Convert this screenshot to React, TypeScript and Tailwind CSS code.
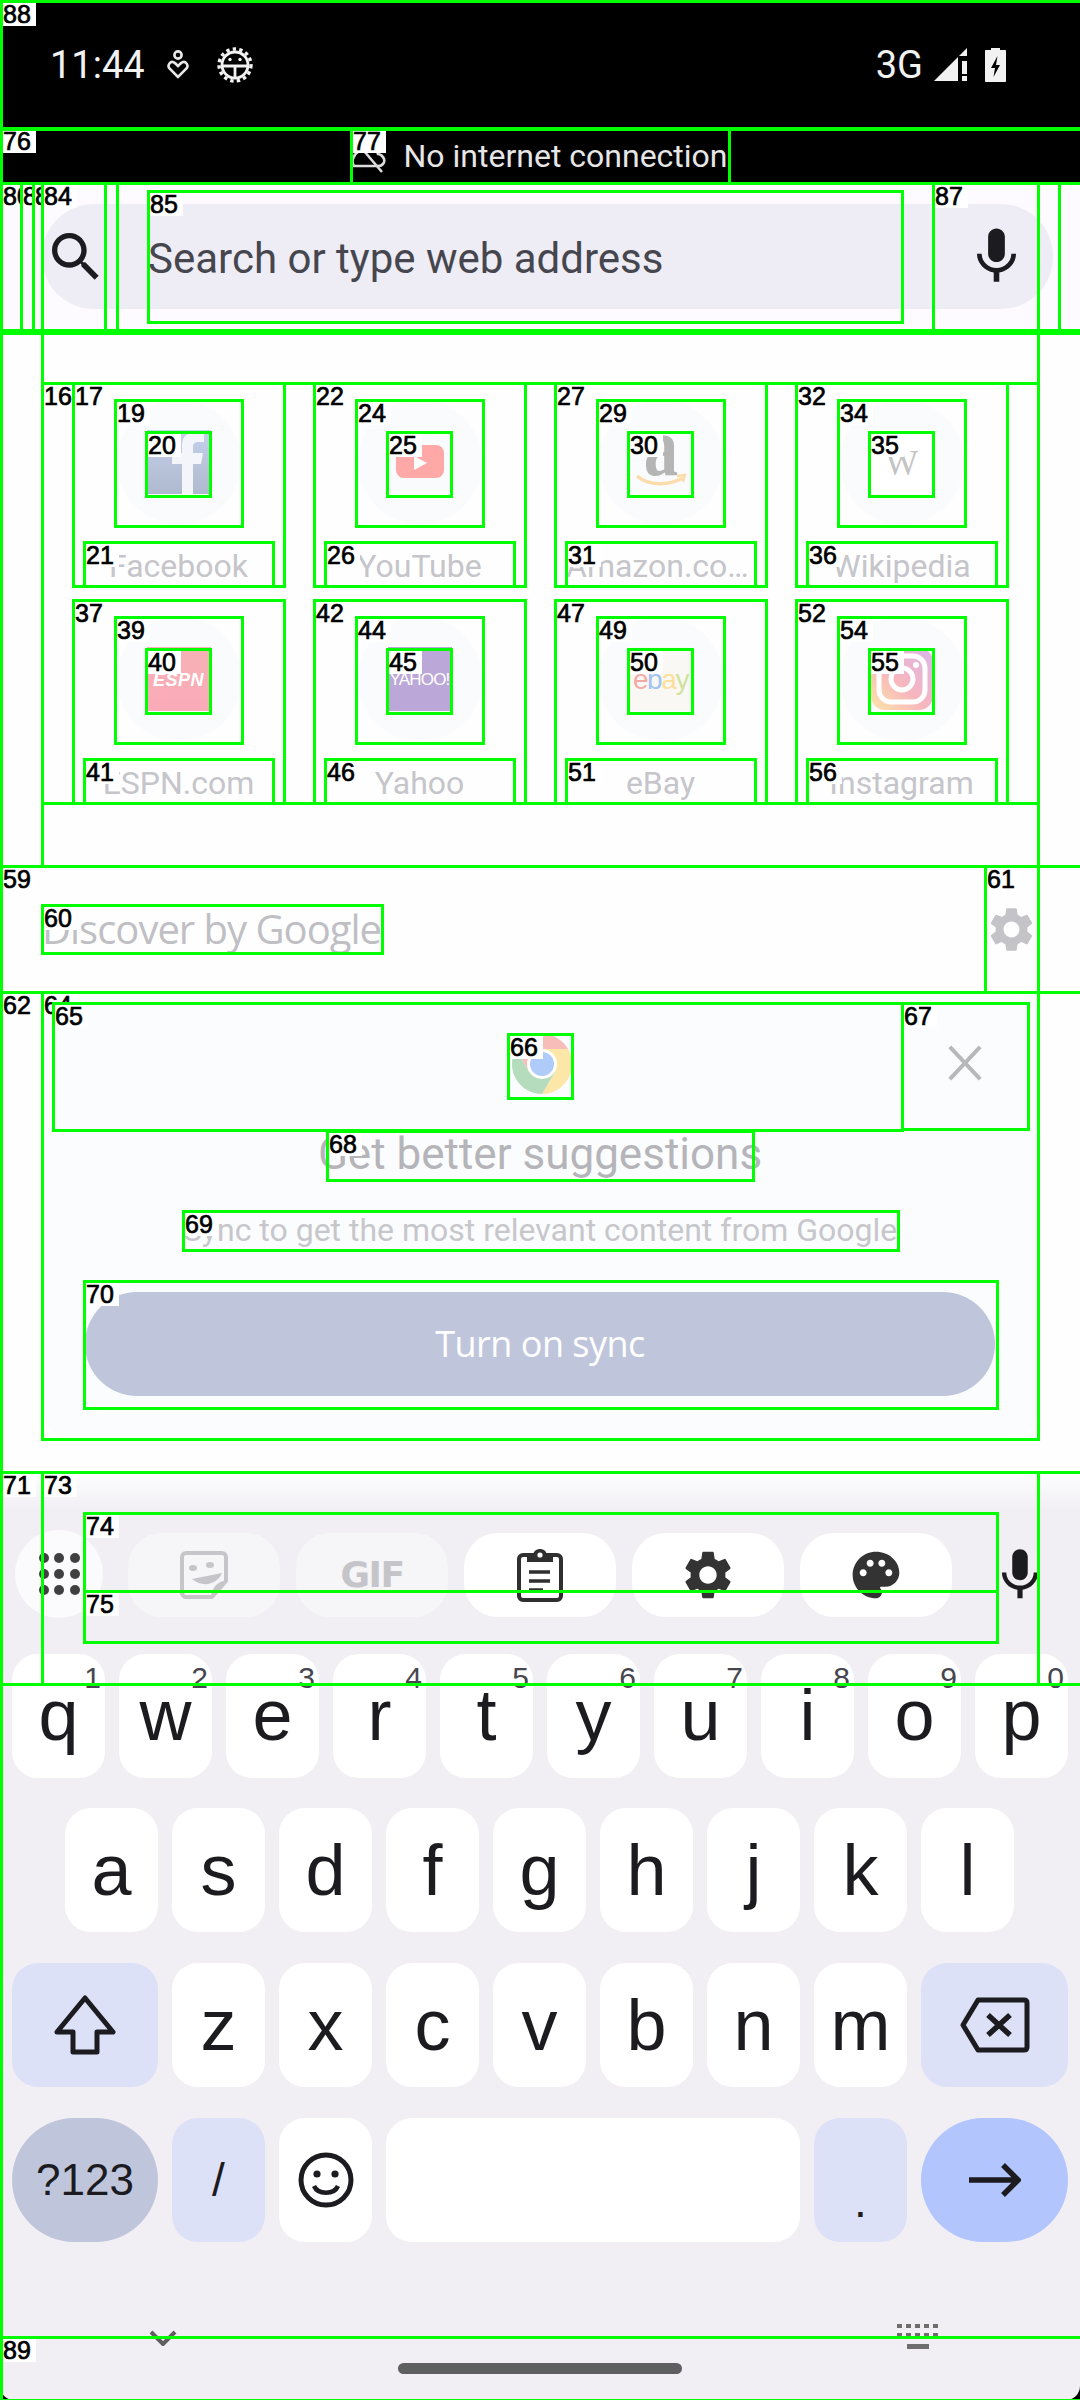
import React from "react";

const roboto = "font-['Roboto','Liberation_Sans',sans-serif]";
const keyFont = "font-['Liberation_Sans','Roboto',sans-serif]";

type Box = { l?: string; x: number; y: number; r: number; b: number };

const cellBoxes = (start: number, rowTop: number, rowBottom: number, col: number): Box[] => {
  const dx = col * 241;
  const n = start;
  const t = rowTop;
  return [
    { l: String(n), x: 73 + dx, y: t, r: 284 + dx, b: rowBottom },
    { l: String(n + 2), x: 115 + dx, y: t + 17, r: 242 + dx, b: t + 143 },
    { l: String(n + 3), x: 146 + dx, y: t + 49, r: 210 + dx, b: t + 113 },
    { l: String(n + 4), x: 84 + dx, y: t + 159, r: 273 + dx, b: rowBottom },
  ];
};

const boxes: Box[] = [
  { x: 0, y: 0, r: 1080, b: 2400 },
  { x: 0, y: 333, r: 1080, b: 866 },
  { x: 42, y: 333, r: 1038, b: 383 },
  { l: "16", x: 42, y: 383, r: 1038, b: 803 },
  ...cellBoxes(17, 383, 586, 0),
  ...cellBoxes(22, 383, 586, 1),
  ...cellBoxes(27, 383, 586, 2),
  ...cellBoxes(32, 383, 586, 3),
  ...cellBoxes(37, 600, 803, 0),
  ...cellBoxes(42, 600, 803, 1),
  ...cellBoxes(47, 600, 803, 2),
  ...cellBoxes(52, 600, 803, 3),
  { x: 42, y: 803, r: 1038, b: 866 },
  { l: "59", x: 0, y: 866, r: 1080, b: 992 },
  { l: "60", x: 42, y: 905, r: 382, b: 953 },
  { l: "61", x: 985, y: 866, r: 1038, b: 992 },
  { l: "62", x: 0, y: 992, r: 1080, b: 1472 },
  { l: "64", x: 42, y: 992, r: 1038, b: 1439 },
  { l: "65", x: 53, y: 1003, r: 902, b: 1130 },
  { l: "66", x: 508, y: 1034, r: 572, b: 1098 },
  { l: "67", x: 902, y: 1003, r: 1028, b: 1129 },
  { l: "68", x: 327, y: 1131, r: 753, b: 1180 },
  { l: "69", x: 183, y: 1211, r: 898, b: 1250 },
  { l: "70", x: 84, y: 1281, r: 997, b: 1408 },
  { l: "71", x: 0, y: 1472, r: 1080, b: 1684 },
  { l: "73", x: 42, y: 1472, r: 1038, b: 1684 },
  { l: "74", x: 84, y: 1513, r: 997, b: 1591 },
  { l: "75", x: 84, y: 1591, r: 997, b: 1642 },
  { l: "76", x: 0, y: 128, r: 1080, b: 183 },
  { l: "77", x: 351, y: 128, r: 729, b: 183 },
  { l: "80", x: 0, y: 183, r: 1080, b: 330 },
  { l: "82", x: 21, y: 183, r: 1059, b: 330 },
  { l: "83", x: 33, y: 183, r: 1059, b: 330 },
  { l: "84", x: 42, y: 183, r: 105, b: 330 },
  { x: 117, y: 183, r: 933, b: 330 },
  { l: "85", x: 148, y: 191, r: 902, b: 322 },
  { l: "87", x: 933, y: 183, r: 1038, b: 330 },
  { l: "88", x: 0, y: 0, r: 1080, b: 128 },
  { l: "89", x: 0, y: 2337, r: 1080, b: 2400 },
];

function Overlay() {
  return (
    <div className="absolute inset-0 pointer-events-none">
      {boxes.map((b, i) => (
        <div
          key={i}
          className="absolute border-[3px] border-[#00ff00]"
          style={{ left: Math.max(b.x - 1, 0), top: Math.max(b.y - 1, 0), width: b.r - b.x + 3, height: b.b - b.y + 3 }}
        >
          {b.l && (
            <span className="absolute left-0 top-0 w-[33px] h-[23px] bg-white text-black text-[25px] leading-[23px] font-['Liberation_Sans',sans-serif] [-webkit-text-stroke:0.7px_black]">
              {b.l}
            </span>
          )}
        </div>
      ))}
    </div>
  );
}

const MIC = "M12 14c1.66 0 2.99-1.34 2.99-3L15 5c0-1.66-1.34-3-3-3S9 3.34 9 5v6c0 1.66 1.34 3 3 3zm5.3-3c0 3-2.54 5.1-5.3 5.1S6.7 14 6.7 11H5c0 3.41 2.72 6.23 6 6.72V21h2v-3.28c3.28-.48 6-3.3 6-6.72h-1.7z";
const GEAR = "M19.14 12.94c.04-.3.06-.61.06-.94s-.02-.64-.07-.94l2.03-1.58c.18-.14.23-.41.12-.61l-1.92-3.32c-.12-.22-.37-.29-.59-.22l-2.39.96c-.5-.38-1.03-.7-1.62-.94l-.36-2.54c-.04-.24-.24-.41-.48-.41h-3.84c-.24 0-.43.17-.47.41l-.36 2.54c-.59.24-1.13.57-1.62.94l-2.39-.96c-.22-.08-.47 0-.59.22L2.74 8.87c-.12.21-.08.47.12.61l2.03 1.58c-.05.3-.09.63-.09.94s.02.64.07.94l-2.03 1.58c-.18.14-.23.41-.12.61l1.92 3.32c.12.22.37.29.59.22l2.39-.96c.5.38 1.03.7 1.62.94l.36 2.54c.05.24.24.41.48.41h3.84c.24 0 .44-.17.47-.41l.36-2.54c.59-.24 1.13-.56 1.62-.94l2.39.96c.22.08.47 0 .59-.22l1.92-3.32c.12-.22.07-.47-.12-.61l-2.01-1.58zM12 15.6c-1.98 0-3.6-1.62-3.6-3.6s1.62-3.6 3.6-3.6 3.6 1.62 3.6 3.6-1.62 3.6-3.6 3.6z";
const SEARCH = "M15.5 14h-.79l-.28-.27C15.41 12.59 16 11.11 16 9.5 16 5.91 13.09 3 9.5 3S3 5.91 3 9.5 5.91 16 9.5 16c1.61 0 3.09-.59 4.23-1.57l.27.28v.79l5 4.99L20.49 19l-4.99-5zm-6 0C7.01 14 5 11.99 5 9.5S7.01 5 9.5 5 14 7.01 14 9.5 11.99 14 9.5 14z";
const PALETTE = "M12 2C6.49 2 2 6.49 2 12s4.49 10 10 10c1.38 0 2.5-1.12 2.5-2.5 0-.61-.23-1.2-.64-1.67-.08-.1-.13-.21-.13-.33 0-.28.22-.5.5-.5H16c3.31 0 6-2.69 6-6 0-4.96-4.49-9-10-9zm-5.5 10.5c-.83 0-1.5-.67-1.5-1.5s.67-1.5 1.5-1.5S8 10.17 8 11s-.67 1.5-1.5 1.5zm3-4C8.67 8.5 8 7.83 8 7s.67-1.5 1.5-1.5S11 6.17 11 7s-.67 1.5-1.5 1.5zm5 0c-.83 0-1.5-.67-1.5-1.5s.67-1.5 1.5-1.5S16 6.17 16 7s-.67 1.5-1.5 1.5zm3 4c-.83 0-1.5-.67-1.5-1.5s.67-1.5 1.5-1.5S19 10.17 19 11s-.67 1.5-1.5 1.5z";

function Icon({ d, size, color, className = "" }: { d: string; size: number; color: string; className?: string }) {
  return (
    <svg width={size} height={size} viewBox="0 0 24 24" fill={color} className={className}>
      <path d={d} />
    </svg>
  );
}

function StatusBar() {
  return (
    <div className={`h-[128px] bg-black flex items-center pl-[50px] pr-[74px] pt-[1px] text-white ${roboto}`}>
      <span className="text-[38px] leading-none text-[#f2f2f2]">11:44</span>
      <svg width="24" height="32" viewBox="0 0 24 32" className="ml-[21px]" fill="none" stroke="#e8e8e8" strokeWidth="2.6">
        <circle cx="12" cy="6" r="3.6" />
        <path d="M12 28 L3.5 19.5 C0.8 16 4.6 11.5 8 13.5 C10 14.6 11 16 12 17 C13 16 14 14.6 16 13.5 C19.4 11.5 23.2 16 20.5 19.5 Z" />
      </svg>
      <svg width="38" height="38" viewBox="0 0 38 38" className="ml-[26px]" fill="none">
        <g stroke="#f2f2f2" strokeWidth="3.4" strokeDasharray="3.4 3.2"><circle cx="19" cy="19" r="16" /></g>
        <circle cx="19" cy="19" r="13" stroke="#f2f2f2" strokeWidth="2.8" />
        <path d="M6 20 H32 M19 20 V32" stroke="#f2f2f2" strokeWidth="2.8" />
        <circle cx="14" cy="13.5" r="1.7" fill="#f2f2f2" />
        <circle cx="24" cy="13.5" r="1.7" fill="#f2f2f2" />
      </svg>
      <div className="flex-1" />
      <span className="text-[38px] leading-none text-[#f2f2f2]">3G</span>
      <svg width="33" height="33" viewBox="0 0 33 33" className="ml-[11px]">
        <path d="M0 33 L24 9 V33 Z" fill="#f2f2f2" />
        <path d="M25 8 L33 0 V8 Z" fill="#f2f2f2" />
        <path d="M28 13 H33 V26 H28 Z M28 28 H33 V33 H28 Z" fill="#f2f2f2" />
      </svg>
      <svg width="21" height="34" viewBox="0 0 21 34" className="ml-[18px]">
        <path d="M6 0 H15 V2 H20 C20.6 2 21 2.4 21 3 V33 C21 33.6 20.6 34 20 34 H1 C.4 34 0 33.6 0 33 V3 C0 2.4 .4 2 1 2 H6 Z" fill="#f2f2f2" />
        <path d="M12.5 8 L6 20 H10 L8.5 29 L15 17 H11 Z" fill="#000" />
      </svg>
    </div>
  );
}

function OfflineBar() {
  return (
    <div className={`h-[55px] bg-black flex items-center justify-center pr-[2px] ${roboto}`}>
      <svg width="36" height="36" viewBox="0 0 36 36" fill="none" stroke="#dcdcdc" strokeWidth="2.6" className="mr-[17px]">
        <path d="M4 28 H28 C33 28 35 24 34 21 C33 18 30 16 28 16 C26 8 14 6 8 14 C3 17 1 24 4 28 Z" />
        <path d="M8 6 L32 34" />
      </svg>
      <span className="text-[32px] leading-none text-[#e6e6e6]">No internet connection</span>
    </div>
  );
}

function SearchArea() {
  return (
    <div className={`h-[150px] bg-[#fdfbff] pt-[21px] pl-[42px] pr-[27px] ${roboto}`}>
      <div className="h-[105px] rounded-[52px] bg-[#eeedf5] flex items-center">
        <Icon d={SEARCH} size={64} color="#1c1b1f" className="ml-[2px]" />
        <span className="ml-[40px] text-[42px] leading-none text-[#46464f] mt-[4px]">Search or type web address</span>
        <div className="flex-1" />
        <Icon d={MIC} size={67} color="#1c1b1f" className="mr-[23px]" />
      </div>
    </div>
  );
}

function Tile({ name, children }: { name: string; children: React.ReactNode }) {
  return (
    <div className="h-[203px] flex flex-col items-center pt-[17px]">
      <div className="w-[124px] h-[124px] rounded-full bg-[#fafbfd] flex items-center justify-center overflow-hidden">{children}</div>
      <div className="mt-[20px] w-[189px] h-[42px] text-center truncate text-[32px] leading-[44px] text-[#c5c5ca] overflow-hidden">{name}</div>
    </div>
  );
}

function Tiles() {
  return (
    <div className={`h-[533px] bg-[#fefeff] pt-[50px] pl-[73px] pr-[73px] ${roboto}`}>
      <div className="grid grid-cols-4 gap-x-[30px] gap-y-[14px]">
        <Tile name="Facebook">
          <div className="w-[64px] h-[64px] bg-gradient-to-b from-[#c5d2ec] to-[#afb9ce] relative overflow-hidden">
            <svg width="64" height="64" viewBox="0 0 64 64">
              <path d="M35 64 V34 H25 V23 H35 V15 C35 5 42 2 50 2 H57 V12 H52 C47 12 46 14 46 17 V23 H56 L54 34 H46 V64 Z" fill="#f3f5fa" />
            </svg>
          </div>
        </Tile>
        <Tile name="YouTube">
          <svg width="64" height="64" viewBox="0 0 64 64">
            <rect x="8" y="15" width="48" height="33" rx="8" fill="#ffa8a8" />
            <path d="M26 26 L39 33 L26 40 Z" fill="#fff" />
          </svg>
        </Tile>
        <Tile name="Amazon.com, Inc.">
          <svg width="64" height="64" viewBox="0 0 64 64" className="overflow-visible">
            <text transform="translate(32 45) scale(0.82 1)" textAnchor="middle" fontSize="84" fontWeight="700" fontFamily="Liberation Serif" fill="#b5b5b5">a</text>
            <path d="M8 46 C20 56 38 56 54 48" stroke="#fbdcaa" strokeWidth="3.5" fill="none" />
            <path d="M48 46 L56 45 L54 52" stroke="#fbdcaa" strokeWidth="2.5" fill="none" />
          </svg>
        </Tile>
        <Tile name="Wikipedia">
          <div className="w-[64px] h-[64px] bg-white flex items-center justify-center">
            <span className="text-[35px] leading-none font-['Liberation_Serif',serif] text-[#c4c4c4] mt-[2px]">W</span>
          </div>
        </Tile>
        <Tile name="ESPN.com">
          <div className="w-[64px] h-[64px] bg-gradient-to-b from-[#f6b2b5] to-[#fbaab8] flex items-center justify-center">
            <span className="text-[18px] leading-none font-black italic text-white tracking-[0.5px] font-['Liberation_Sans',sans-serif] mt-[1px]">ESPN</span>
          </div>
        </Tile>
        <Tile name="Yahoo">
          <div className="w-[64px] h-[64px] bg-[#bba7d8] flex items-center justify-center">
            <span className="text-[17px] leading-none text-white tracking-[-0.8px] font-['Liberation_Sans',sans-serif] mt-[1px]">YAHOO!</span>
          </div>
        </Tile>
        <Tile name="eBay">
          <div className="w-[64px] h-[64px] bg-[#faf8f5] flex items-center justify-center">
            <span className="text-[28px] leading-none tracking-[-1.4px] font-['Liberation_Sans',sans-serif] mt-[1px]">
              <span className="text-[#f5a9a5]">e</span>
              <span className="text-[#a3c4f0]">b</span>
              <span className="text-[#fbdf9b]">a</span>
              <span className="text-[#cfe29e]">y</span>
            </span>
          </div>
        </Tile>
        <Tile name="Instagram">
          <svg width="64" height="64" viewBox="0 0 64 64">
            <defs>
              <linearGradient id="ig" x1="0" y1="1" x2="1" y2="0">
                <stop offset="0" stopColor="#fde6a8" />
                <stop offset="0.45" stopColor="#f7b6bd" />
                <stop offset="1" stopColor="#d9b6ea" />
              </linearGradient>
            </defs>
            <rect x="1" y="1" width="62" height="62" rx="14" fill="url(#ig)" />
            <rect x="9" y="9" width="46" height="46" rx="12" fill="none" stroke="#fff" strokeWidth="5" />
            <circle cx="32" cy="32" r="11" fill="none" stroke="#fff" strokeWidth="5" />
            <circle cx="46" cy="18" r="3" fill="#fff" />
          </svg>
        </Tile>
      </div>
    </div>
  );
}

function Discover() {
  return (
    <div className="h-[126px] bg-[#fefeff] flex items-center pl-[42px] pr-[42px]">
      <span className="text-[40px] leading-none text-[#bfbfc4] font-['Open_Sans',sans-serif] tracking-[-1px]">Discover by Google</span>
      <div className="flex-1" />
      <Icon d={GEAR} size={53} color="#c4c4c8" />
    </div>
  );
}

function Chrome() {
  return (
    <svg width="64" height="64" viewBox="0 0 64 64">
      <path d="M32 2 A30 30 0 0 1 58 17 L32 17 Z" fill="#f7bdb8" />
      <path d="M32 2 A30 30 0 0 0 6 17 L19 40 L32 17 Z" fill="#f7bdb8" />
      <path d="M58 17 A30 30 0 0 1 32 62 L45 40 L32 17 Z" fill="#fde7a8" />
      <path d="M6 17 A30 30 0 0 0 32 62 L45 40 L19 40 Z" fill="#b5dcbc" />
      <circle cx="32" cy="32" r="15" fill="#fff" />
      <circle cx="32" cy="32" r="12" fill="#aecbfa" />
    </svg>
  );
}

function SyncCard() {
  return (
    <div className={`h-[480px] bg-[#fefeff] pl-[42px] pr-[42px] ${roboto}`}>
      <div className="h-[447px] bg-[#fbfcfe] rounded-b-[30px] flex flex-col items-center">
        <div className="h-[139px] w-full flex pt-[11px] pl-[11px] pr-[10px]">
          <div className="flex-1 flex items-center justify-center pl-[126px] pb-[7px]">
            <div className="mr-[-2px]">
              <Chrome />
            </div>
          </div>
          <div className="w-[126px] flex items-center justify-center pb-[9px]">
            <svg width="36" height="36" viewBox="0 0 38 38" stroke="#b8b8b8" strokeWidth="4.2">
              <path d="M3 2 L35 36 M35 2 L3 36" />
            </svg>
          </div>
        </div>
        <div className="h-[49px] text-[44px] leading-[46px] text-[#b5b5b9]">Get better suggestions</div>
        <div className="mt-[31px] h-[39px] text-[32px] leading-[39px] text-[#c7c7cb]">Sync to get the most relevant content from Google</div>
        <div className="mt-[42px] w-[910px] h-[104px] rounded-full bg-[#bfc6dc] flex items-center justify-center text-[36px] leading-none text-white font-['Open_Sans',sans-serif] font-medium tracking-[-0.5px]">Turn on sync</div>
      </div>
    </div>
  );
}

function Pill({ children, off }: { children: React.ReactNode; off?: boolean }) {
  return <div className={`w-[152px] h-[84px] rounded-[34px] flex items-center justify-center ${off ? "bg-[#f6f5f8]" : "bg-white"}`}>{children}</div>;
}

function Toolbar() {
  return (
    <div className="h-[144px] flex items-start pt-[20px] pl-[15px]">
      <div className="w-[88px] h-[88px] rounded-full bg-[#fbfafc] grid grid-cols-[10px_10px_10px] gap-x-[5.5px] gap-y-[6px] content-center justify-center">
        {Array.from({ length: 9 }).map((_, i) => (
          <span key={i} className="w-[10px] h-[10px] rounded-full bg-[#404040]" />
        ))}
      </div>
      <div className="flex gap-[16px] ml-[25px] mt-[3px]">
        <Pill off>
          <svg width="48" height="48" viewBox="0 0 48 48" fill="none" stroke="#c6c5c9" strokeWidth="4" strokeLinejoin="round">
            <path d="M6 2 H42 C44 2 46 4 46 6 V30 L32 46 H6 C4 46 2 44 2 42 V6 C2 4 4 2 6 2 Z" />
            <path d="M46 30 C38 30 32 36 31 46 Z" fill="#c6c5c9" stroke="none" />
            <ellipse cx="13" cy="17" rx="4" ry="3" fill="#c6c5c9" stroke="none" />
            <ellipse cx="30" cy="14" rx="4" ry="3" fill="#c6c5c9" stroke="none" />
            <path d="M12 28 L42 22 C38 32 24 38 12 28 Z" fill="#c6c5c9" stroke="none" />
          </svg>
        </Pill>
        <Pill off>
          <span className="text-[36px] leading-none font-bold text-[#c5c4c8] font-['DejaVu_Sans',sans-serif] tracking-[-1.5px]">GIF</span>
        </Pill>
        <Pill>
          <svg width="46" height="54" viewBox="0 0 46 54" fill="none" stroke="#2f2f2f" strokeWidth="4">
            <rect x="2" y="7" width="42" height="45" rx="4" />
            <path d="M10 7 H16 C17 -1 29 -1 30 7 H36 V14 H10 Z" fill="#2f2f2f" stroke="none" />
            <circle cx="23" cy="7" r="2.6" fill="#fff" stroke="none" />
            <path d="M12 24 H33 M12 33 H33 M12 42 H26" strokeWidth="3.6" />
          </svg>
        </Pill>
        <Pill>
          <Icon d={GEAR} size={58} color="#333333" />
        </Pill>
        <Pill>
          <Icon d={PALETTE} size={56} color="#333333" />
        </Pill>
      </div>
      <Icon d={MIC} size={62} color="#1c1b1f" className="ml-[37px] mt-[14px]" />
    </div>
  );
}

const numRow = ["q", "w", "e", "r", "t", "y", "u", "i", "o", "p"];
const hints = ["1", "2", "3", "4", "5", "6", "7", "8", "9", "0"];

function Key({ children, className = "w-[93px] bg-white" }: { children?: React.ReactNode; className?: string }) {
  return (
    <div className={`relative h-[124px] rounded-[26px] flex items-center justify-center text-[72px] leading-none text-[#1c1b1f] ${className}`}>
      {children}
    </div>
  );
}

function Keyboard() {
  return (
    <div className={`flex-1 bg-[#f1eff4] relative ${keyFont}`}>
      <Toolbar />
      <div className="flex gap-[14px] pl-[12px] pr-[12px]">
        {numRow.map((k, i) => (
          <Key key={k}>
            <span className="mt-[-2px]">{k}</span>
            <span className="absolute right-[4px] top-[9px] text-[30px] leading-none text-[#46464f]">{hints[i]}</span>
          </Key>
        ))}
      </div>
      <div className="flex gap-[14px] pl-[65px] mt-[30px]">
        {"asdfghjkl".split("").map((k) => (
          <Key key={k}>{k}</Key>
        ))}
      </div>
      <div className="flex gap-[14px] pl-[12px] mt-[31px]">
        <Key className="w-[146px] bg-[#dde1f7]">
          <svg width="64" height="62" viewBox="0 0 64 62" fill="none" stroke="#1c1b1f" strokeWidth="5" strokeLinejoin="round">
            <path d="M32 4 L60 38 H44 V58 H20 V38 H4 Z" />
          </svg>
        </Key>
        {"zxcvbnm".split("").map((k) => (
          <Key key={k}>{k}</Key>
        ))}
        <Key className="w-[147px] bg-[#dde1f7]">
          <svg width="70" height="56" viewBox="0 0 70 56" fill="none" stroke="#1c1b1f" strokeWidth="5" strokeLinejoin="round">
            <path d="M18 3 H64 C66 3 67 4 67 6 V50 C67 52 66 53 64 53 H18 L3 28 Z" />
            <path d="M28 18 L50 38 M50 18 L28 38" strokeWidth="5.5" />
          </svg>
        </Key>
      </div>
      <div className="flex gap-[14px] pl-[12px] mt-[31px]">
        <Key className="w-[146px] bg-[#bfc6dc] !rounded-[62px] !text-[44px]">?123</Key>
        <Key className="w-[93px] bg-[#dde1f7] !text-[46px]">/</Key>
        <Key className="w-[93px] bg-white">
          <svg width="56" height="56" viewBox="0 0 56 56" fill="none" stroke="#1c1b1f" strokeWidth="5">
            <circle cx="28" cy="28" r="25" />
            <circle cx="19" cy="22" r="3.6" fill="#1c1b1f" stroke="none" />
            <circle cx="37" cy="22" r="3.6" fill="#1c1b1f" stroke="none" />
            <path d="M16 34 C20 43 36 43 40 34" strokeWidth="4.5" />
          </svg>
        </Key>
        <Key className="w-[414px] bg-white" />
        <Key className="w-[93px] bg-[#dde1f7] !text-[46px]">
          <span className="mt-[42px]">.</span>
        </Key>
        <Key className="w-[147px] bg-[#b3c5fd] !rounded-[62px]">
          <svg width="52" height="34" viewBox="0 0 52 34" fill="none" stroke="#1c1b1f" strokeWidth="5.5">
            <path d="M0 17 H48 M34 2 L49 17 L34 32" />
          </svg>
        </Key>
      </div>
      <div className="flex justify-between items-start pl-[149px] pr-[141px] mt-[82px]">
        <svg width="28" height="16" viewBox="0 0 28 16" className="mt-[6px]" fill="none" stroke="#5f5f5f" strokeWidth="4">
          <path d="M2 2 L14 14 L26 2" />
        </svg>
        <svg width="42" height="26" viewBox="0 0 42 26" fill="#6e6e6e">
          {[0, 9, 18, 27, 36].map((x) => (
            <rect key={x} x={x} y="0" width="5" height="4" />
          ))}
          {[0, 9, 18, 27, 36].map((x) => (
            <rect key={x} x={x} y="9" width="5" height="4" />
          ))}
          <rect x="10" y="20" width="22" height="5" />
        </svg>
      </div>
      <div className="absolute bottom-[26px] left-[398px] w-[284px] h-[11px] rounded-full bg-[#5f5f61]" />
    </div>
  );
}

export default function App() {
  return (
    <div className="relative w-[1080px] h-[2400px] overflow-hidden bg-black">
      <div className="w-[1080px] h-[2400px] flex flex-col overflow-hidden rounded-b-[14px]">
        <StatusBar />
        <OfflineBar />
        <SearchArea />
        <Tiles />
        <Discover />
        <SyncCard />
        <div className="h-[38px] bg-gradient-to-b from-[#fefeff] to-[#f1eff4]" />
        <Keyboard />
      </div>
      <Overlay />
    </div>
  );
}
